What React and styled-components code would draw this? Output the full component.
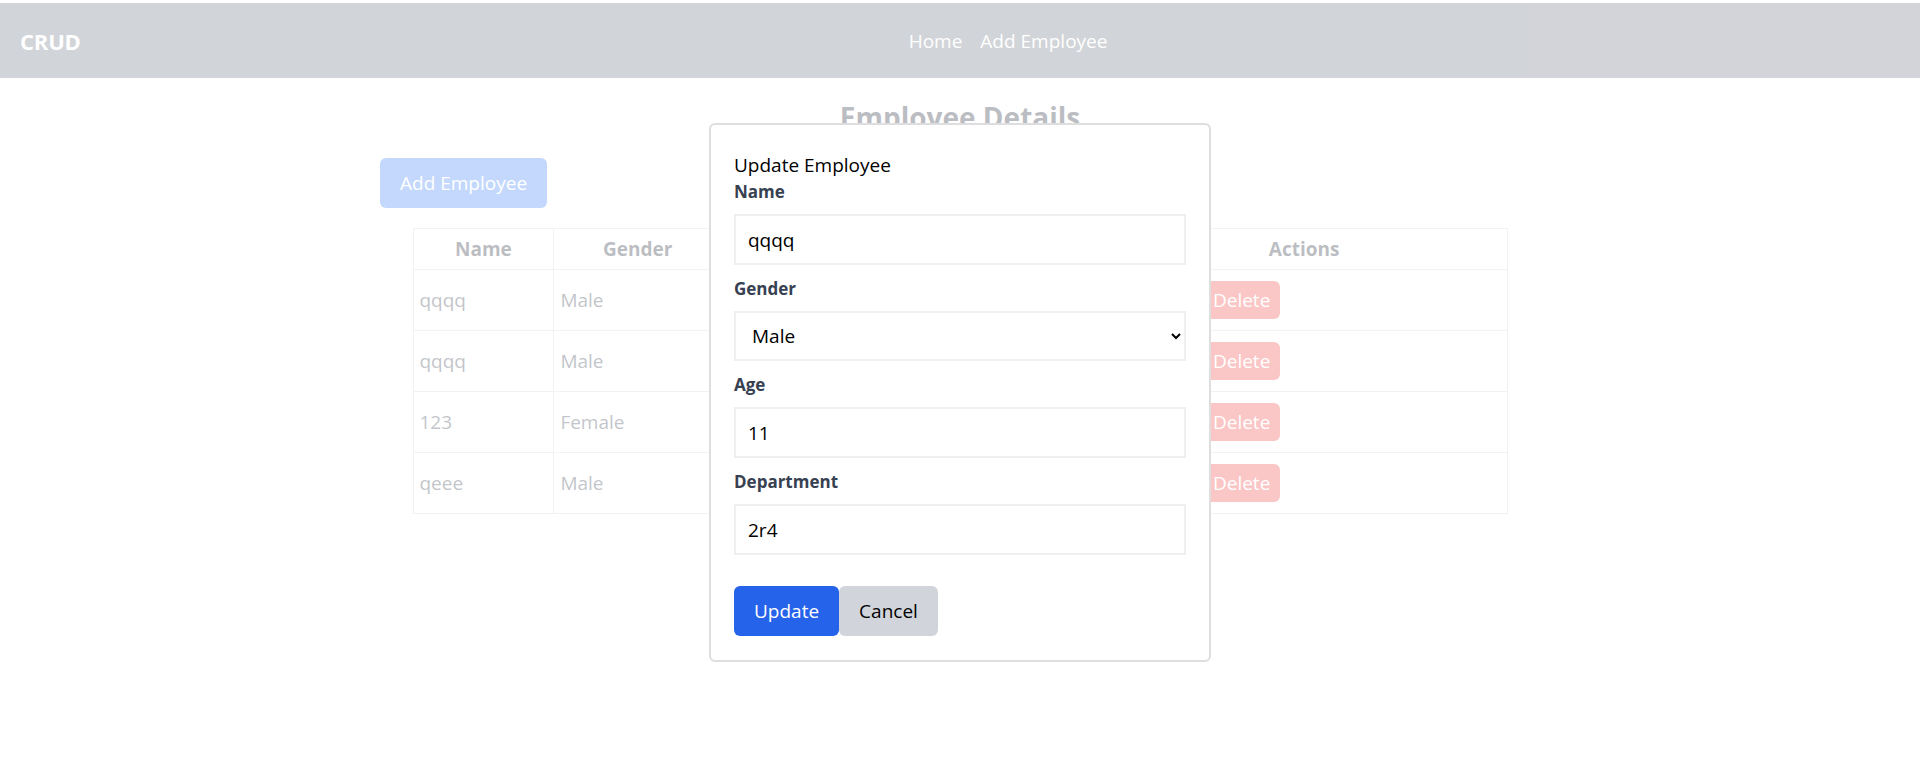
import React from 'react';
import styled, { createGlobalStyle } from 'styled-components';

const GlobalStyle = createGlobalStyle`
  * {
    box-sizing: border-box;
  }

  body {
    margin: 0;
    padding-top: 3px;
    background: #ffffff;
    font-family: "Open Sans", "Noto Sans", sans-serif;
  }
`;

const Page = styled.div`
  position: relative;
  min-height: 760px;
`;

const Backdrop = styled.div`
  opacity: 0.3;
`;

const Navbar = styled.nav`
  display: flex;
  align-items: center;
  height: 75px;
  padding: 0 20px;
  background-color: #6b7280;
`;

const Brand = styled.div`
  color: #ffffff;
  font-size: 22px;
  font-weight: 700;
  letter-spacing: -0.2px;
`;

const NavLinks = styled.div`
  display: flex;
  gap: 18px;
  margin-left: 828px;
`;

const NavLink = styled.a`
  color: #ffffff;
  font-size: 19px;
  text-decoration: none;
`;

const Main = styled.main`
  width: 1160px;
  margin: 0 auto;
  display: flex;
  flex-direction: column;
`;

const Heading = styled.h1`
  margin: 20px 0 22px;
  text-align: center;
  font-size: 28px;
  line-height: 38px;
  font-weight: 700;
  color: #1f2937;
`;

const Button = styled.button`
  border: none;
  border-radius: 6px;
  font-family: inherit;
  font-size: 19px;
  line-height: 26px;
  padding: ${(p) => (p.$small ? '6px 10px' : '12px 20px')};
  color: ${(p) => p.$color || '#ffffff'};
  background-color: ${(p) => p.$bg};
  cursor: pointer;
`;

const AddButton = styled(Button)`
  align-self: flex-start;
  margin-bottom: 20px;
`;

const Table = styled.table`
  width: 1095px;
  margin: 0 auto;
  border-collapse: collapse;
  font-size: 19px;
`;

const Th = styled.th`
  height: 41px;
  padding: 0 6px;
  border: 1px solid #d1d5db;
  color: #1f2937;
  font-weight: 700;
  text-align: center;
`;

const Td = styled.td`
  height: 61px;
  padding: 0 6px;
  border: 1px solid #d1d5db;
  color: #374151;
`;

const Actions = styled.div`
  display: flex;
  gap: 10px;
`;

const Modal = styled.div`
  position: absolute;
  top: 120px;
  left: 50%;
  transform: translateX(-50%);
  width: 502px;
  padding: 27px 23px 24px;
  background: #ffffff;
  border: 2px solid #dedede;
  border-radius: 6px;
  display: flex;
  flex-direction: column;
`;

const ModalTitle = styled.div`
  font-size: 19px;
  line-height: 26px;
  color: #000000;
  margin-bottom: 2px;
`;

const Field = styled.div`
  display: flex;
  flex-direction: column;
  margin-bottom: 12px;
`;

const Label = styled.label`
  font-size: 17px;
  line-height: 24px;
  font-weight: 700;
  color: #374151;
  margin-bottom: 10px;
`;

const Input = styled.input`
  height: 51px;
  padding: 0 12px;
  border: 2px solid #efefef;
  font-family: inherit;
  font-size: 19px;
  color: #000000;
  outline: none;
`;

const Select = styled.select`
  height: 50px;
  padding: 0 12px;
  border: 2px solid #efefef;
  border-radius: 0;
  background: #ffffff;
  font-family: inherit;
  font-size: 19px;
  color: #000000;
  outline: none;
`;

const ButtonRow = styled.div`
  display: flex;
  margin-top: 19px;
`;

const employees = [
  { name: 'qqqq', gender: 'Male', age: 11, department: '2r4' },
  { name: 'qqqq', gender: 'Male', age: 22, department: 'IT' },
  { name: '123', gender: 'Female', age: 30, department: 'HR' },
  { name: 'qeee', gender: 'Male', age: 25, department: 'Sales' },
];

const App = () => (
  <Page>
    <GlobalStyle />
    <Backdrop>
      <Navbar>
        <Brand>CRUD</Brand>
        <NavLinks>
          <NavLink href="#">Home</NavLink>
          <NavLink href="#">Add Employee</NavLink>
        </NavLinks>
      </Navbar>
      <Main>
        <Heading>Employee Details</Heading>
        <AddButton $bg="#3b82f6">Add Employee</AddButton>
        <Table>
          <colgroup>
            <col style={{ width: 141 }} />
            <col style={{ width: 168 }} />
            <col style={{ width: 150 }} />
            <col style={{ width: 230 }} />
            <col style={{ width: 406 }} />
          </colgroup>
          <thead>
            <tr>
              <Th>Name</Th>
              <Th>Gender</Th>
              <Th>Age</Th>
              <Th>Department</Th>
              <Th>Actions</Th>
            </tr>
          </thead>
          <tbody>
            {employees.map((e, i) => (
              <tr key={i}>
                <Td>{e.name}</Td>
                <Td>{e.gender}</Td>
                <Td>{e.age}</Td>
                <Td>{e.department}</Td>
                <Td>
                  <Actions>
                    <Button $small $bg="#22c55e">Update</Button>
                    <Button $small $bg="#ef4444">Delete</Button>
                  </Actions>
                </Td>
              </tr>
            ))}
          </tbody>
        </Table>
      </Main>
    </Backdrop>

    <Modal>
      <ModalTitle>Update Employee</ModalTitle>
      <Field>
        <Label>Name</Label>
        <Input defaultValue="qqqq" />
      </Field>
      <Field>
        <Label>Gender</Label>
        <Select defaultValue="Male">
          <option>Male</option>
          <option>Female</option>
        </Select>
      </Field>
      <Field>
        <Label>Age</Label>
        <Input defaultValue="11" />
      </Field>
      <Field>
        <Label>Department</Label>
        <Input defaultValue="2r4" />
      </Field>
      <ButtonRow>
        <Button $bg="#2563eb">Update</Button>
        <Button $bg="#d1d5db" $color="#000000">Cancel</Button>
      </ButtonRow>
    </Modal>
  </Page>
);

export default App;
